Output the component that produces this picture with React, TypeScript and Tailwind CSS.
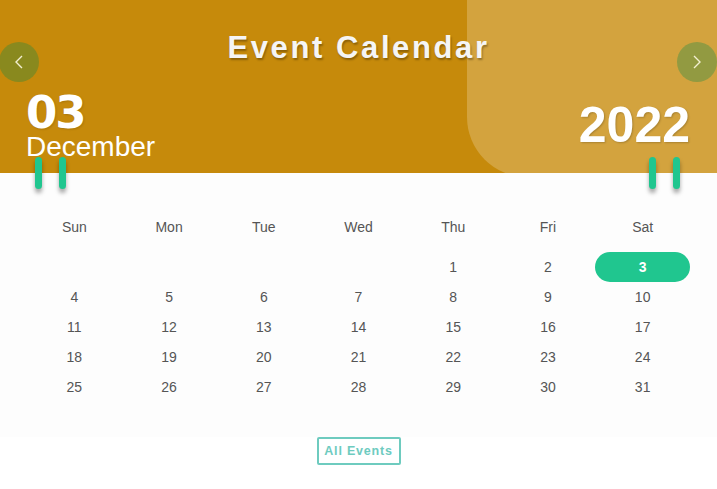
import React from "react";

const days = ["Sun", "Mon", "Tue", "Wed", "Thu", "Fri", "Sat"];

function buildCells() {
  const cells: (number | null)[] = [];
  for (let i = 0; i < 4; i++) cells.push(null);
  for (let d = 1; d <= 31; d++) cells.push(d);
  while (cells.length % 7 !== 0) cells.push(null);
  return cells;
}

function Pin() {
  return (
    <div className="w-[7px] h-[32px] rounded-full bg-[#20c68f] shadow-[0_4px_4px_rgba(0,0,0,0.35)]" />
  );
}

export default function App() {
  const cells = buildCells();
  return (
    <div className="w-[717px] h-[489px] bg-white overflow-hidden" style={{ fontFamily: '"Liberation Sans", Arial, sans-serif' }}>
      <div className="relative h-[173px] bg-[#c68a0b] overflow-hidden">
        <div className="absolute left-[467px] right-0 top-0 bottom-[-4px] bg-[#d3a33e] rounded-bl-[60px]" />
        <div className="relative flex flex-col">
          <div className="pt-[32px] text-center text-[31px] leading-none font-bold text-[#f5f5f5] tracking-[2.6px] [text-shadow:1px_2px_2px_rgba(0,0,0,0.3)]">
            Event Calendar
          </div>
          <div className="flex justify-between items-start pl-[26px] pr-[27px]">
            <div className="flex flex-col mt-[31px] text-white">
              <div className="text-[45px] leading-[38px] h-[38px] font-bold tracking-[-2px] [text-shadow:1px_1px_2px_rgba(0,0,0,0.15)]" style={{ fontFamily: '"DejaVu Sans", sans-serif' }}>
                03
              </div>
              <div className="text-[28px] leading-none mt-[1px]">December</div>
            </div>
            <div className="mt-[37px] text-[50px] leading-none font-bold text-white [text-shadow:1px_1px_2px_rgba(0,0,0,0.2)]">
              2022
            </div>
          </div>
        </div>
        <button className="absolute left-[-1px] top-[42px] w-[40px] h-[40px] rounded-full bg-[rgba(10,138,70,0.32)] flex items-center justify-center">
          <svg width="14" height="16" viewBox="0 0 14 16" fill="none">
            <path d="M10 2 L4 8 L10 14" stroke="#f3efd0" strokeWidth="1.4" />
          </svg>
        </button>
        <button className="absolute right-0 top-[42px] w-[40px] h-[40px] rounded-full bg-[rgba(10,138,70,0.32)] flex items-center justify-center">
          <svg width="14" height="16" viewBox="0 0 14 16" fill="none">
            <path d="M4 2 L10 8 L4 14" stroke="#f3efd0" strokeWidth="1.4" />
          </svg>
        </button>
      </div>
      <div className="relative bg-[#fdfdfd] px-[27px] pt-[39px] pb-[35px]">
        <div className="absolute left-[35px] top-[-16px] flex gap-[17px]">
          <Pin />
          <Pin />
        </div>
        <div className="absolute left-[649px] top-[-16px] flex gap-[17px]">
          <Pin />
          <Pin />
        </div>
        <div className="grid grid-cols-7 text-[14px] text-[#555]">
          {days.map((d) => (
            <div key={d} className="h-[30px] flex items-center justify-center">
              {d}
            </div>
          ))}
        </div>
        <div className="grid grid-cols-7 mt-[10px] text-[14px] text-[#555]">
          {cells.map((c, i) => (
            <div key={i} className="h-[30px] flex items-center justify-center">
              {c === 3 ? (
                <div className="w-full h-full rounded-full bg-[#20c68f] text-white font-bold flex items-center justify-center">
                  3
                </div>
              ) : (
                c
              )}
            </div>
          ))}
        </div>
      </div>
      <div className="flex justify-center">
        <button className="w-[84px] h-[28px] border-2 border-[#6ecbbf] rounded-[2px] text-[#6ecbbf] text-[12.5px] font-bold tracking-[0.8px] flex items-center justify-center">
          All Events
        </button>
      </div>
    </div>
  );
}
